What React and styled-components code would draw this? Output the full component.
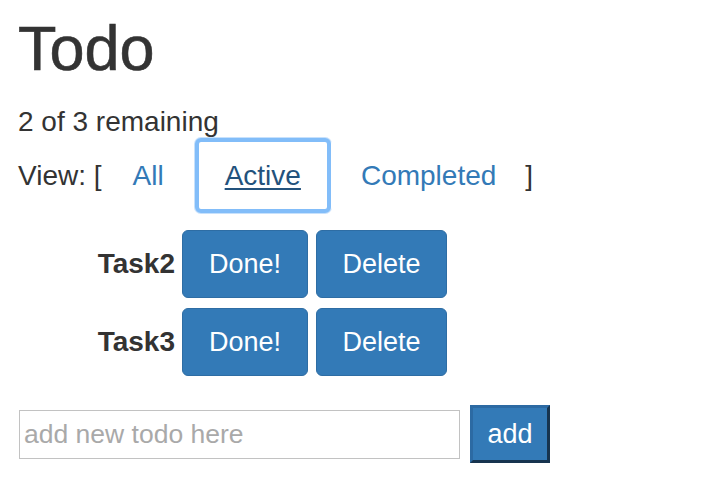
import styled, { createGlobalStyle } from 'styled-components'

const GlobalStyle = createGlobalStyle`
  body {
    margin: 0;
    background: #fff;
    font-family: "Liberation Sans", Arial, Helvetica, sans-serif;
    color: #333;
  }
`

const Page = styled.div`
  padding: 14px 18px;
  font-size: 28px;
  line-height: 1.3;
`

const Title = styled.h1`
  margin: 0;
  font-size: 63px;
  font-weight: 500;
  line-height: 1.1;
  -webkit-text-stroke: 0.6px #333;
`

const Remaining = styled.p`
  margin: 23px 0 0 0;
  line-height: 32px;
`

const ViewRow = styled.div`
  display: flex;
  align-items: center;
  height: 75px;
`

const Bracket = styled.span`
  margin-left: ${(p) => p.$left || 0}px;
`

const FilterLink = styled.button`
  box-sizing: border-box;
  font-family: inherit;
  font-size: 28px;
  background: #fff;
  border: 4px solid ${(p) => (p.$active ? '#82bdf9' : 'transparent')};
  border-radius: 6px;
  box-shadow: ${(p) => (p.$active ? '0 0 0 1px rgba(130, 189, 249, 0.45)' : 'none')};
  color: ${(p) => (p.$active ? '#23527c' : '#337ab7')};
  text-decoration: ${(p) => (p.$active ? 'underline' : 'none')};
  text-underline-offset: 3px;
  padding: 1px ${(p) => p.$pad}px 0;
  height: 75px;
  cursor: pointer;
`

const TaskList = styled.div`
  display: flex;
  flex-direction: column;
  gap: 10px;
  margin-top: 17px;
`

const TaskRow = styled.div`
  display: flex;
  align-items: center;
  gap: 8px;
`

const TaskName = styled.span`
  width: 157px;
  text-align: right;
  font-weight: bold;
  margin-right: -1px;
`

const ActionButton = styled.button`
  box-sizing: border-box;
  font-family: inherit;
  font-size: 27px;
  color: #fff;
  background: #337ab7;
  border: 1px solid #2e6da4;
  border-radius: 6px;
  height: 68px;
  width: ${(p) => p.$width}px;
  padding: 0;
  cursor: pointer;
`

const AddForm = styled.form`
  display: flex;
  align-items: center;
  gap: 10px;
  margin-top: 29px;
  margin-left: 1px;
`

const TodoInput = styled.input`
  box-sizing: border-box;
  width: 441px;
  height: 49px;
  border: 1px solid #c2c2c2;
  font-family: inherit;
  font-size: 26.5px;
  padding: 0 4px;
  color: #333;
  &::placeholder {
    color: #a9a9a9;
  }
`

const AddButton = styled.button`
  box-sizing: border-box;
  width: 80px;
  height: 58px;
  font-family: inherit;
  font-size: 27px;
  color: #fff;
  background: #337ab7;
  border: 3px solid;
  border-color: #2c6aa3 #17344f #17344f #2c6aa3;
  padding: 0;
  cursor: pointer;
`

const tasks = ['Task2', 'Task3']

export default function App() {
  return (
    <>
      <GlobalStyle />
      <Page>
        <Title>Todo</Title>
        <Remaining>2 of 3 remaining</Remaining>
        <ViewRow>
          <Bracket>View: [</Bracket>
          <FilterLink $pad={27}>All</FilterLink>
          <FilterLink $pad={26} $active>Active</FilterLink>
          <FilterLink $pad={26}>Completed</FilterLink>
          <Bracket $left={-1}>]</Bracket>
        </ViewRow>
        <TaskList>
          {tasks.map((t) => (
            <TaskRow key={t}>
              <TaskName>{t}</TaskName>
              <ActionButton $width={126}>Done!</ActionButton>
              <ActionButton $width={131}>Delete</ActionButton>
            </TaskRow>
          ))}
        </TaskList>
        <AddForm onSubmit={(e) => e.preventDefault()}>
          <TodoInput placeholder="add new todo here" />
          <AddButton type="submit">add</AddButton>
        </AddForm>
      </Page>
    </>
  )
}
